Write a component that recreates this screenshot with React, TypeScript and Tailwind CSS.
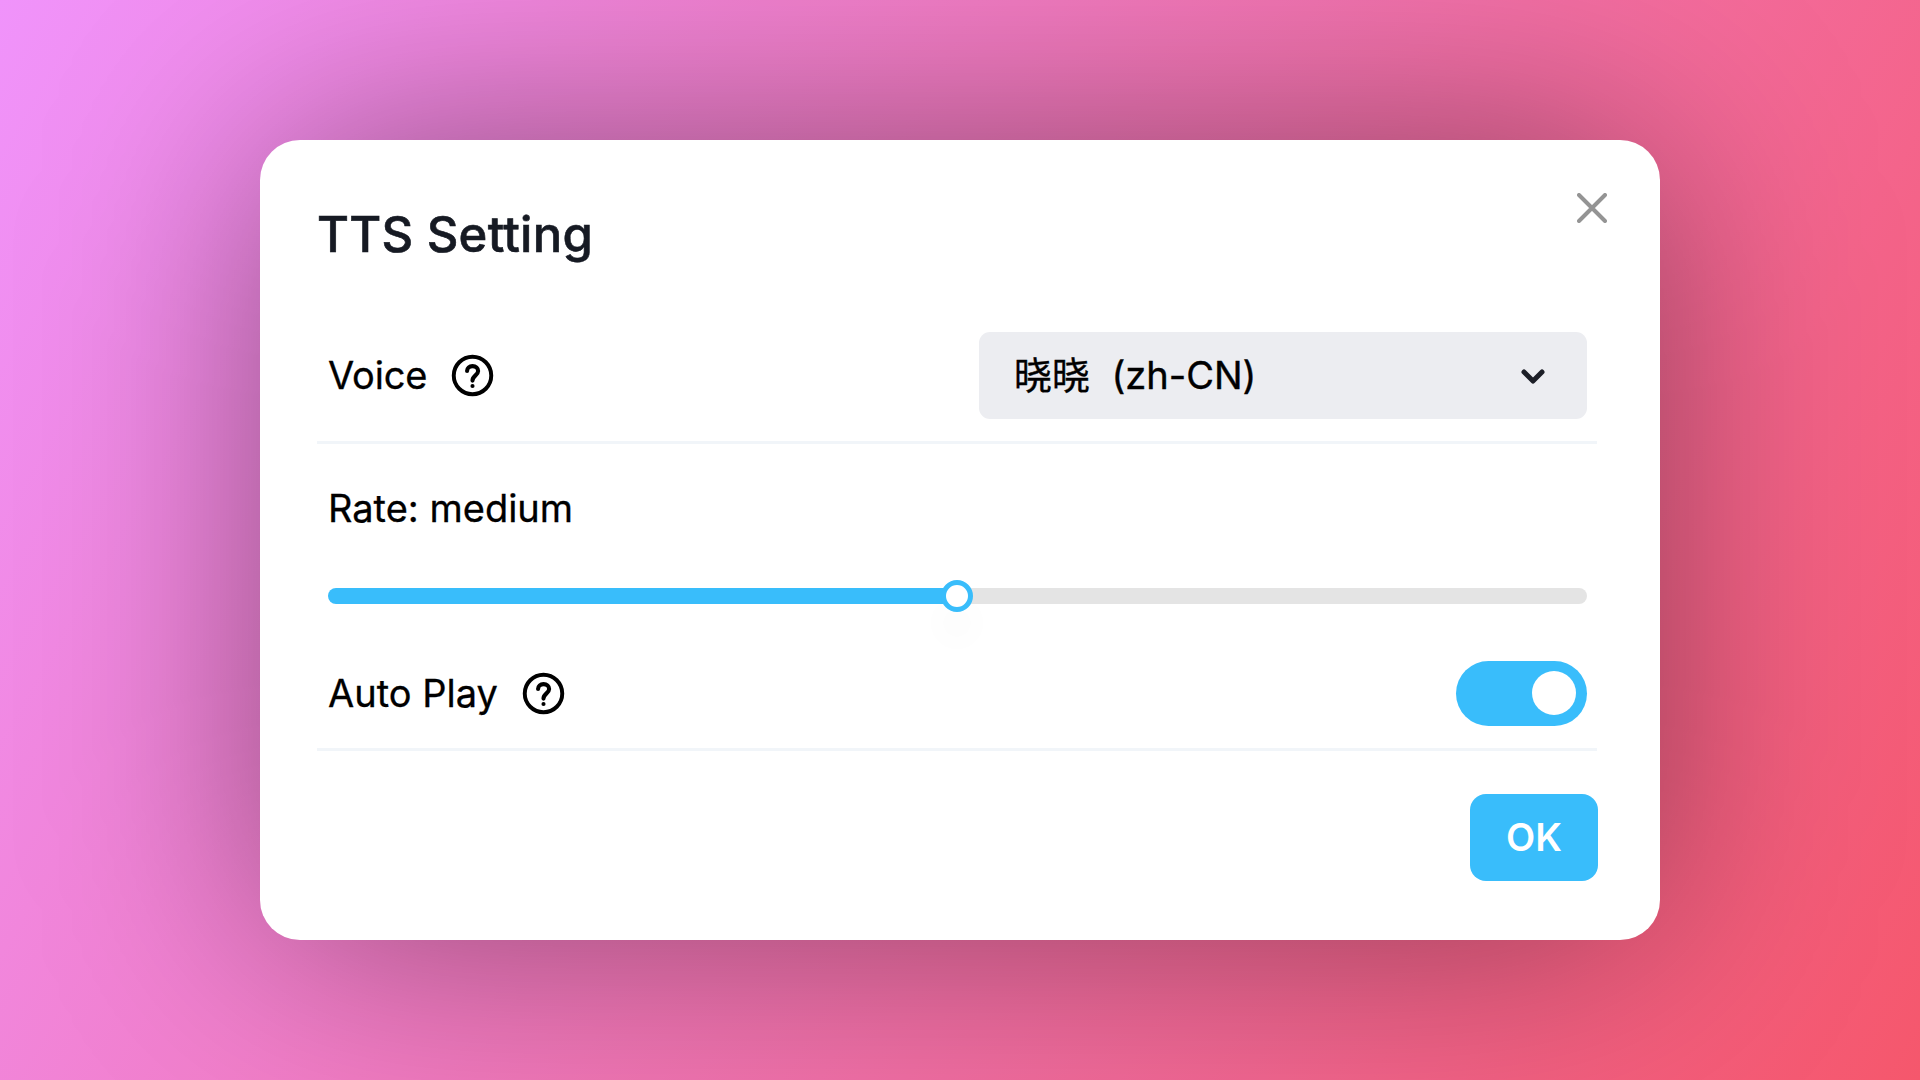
import React from "react";

function HelpIcon() {
  return (
    <svg width="45" height="45" viewBox="0 0 24 24" fill="none" stroke="currentColor" strokeWidth="2.1">
      <circle cx="12" cy="12" r="10" />
      <path d="M9.100 9.600C9.100 8 10.300 7 12 7C13.800 7 15 8.100 15 9.600C15 11.800 12 12.100 12 14.700" strokeWidth="2.2" strokeLinecap="round" />
      <circle cx="12" cy="17.600" r="1.100" fill="currentColor" stroke="none" />
    </svg>
  );
}

function Label({ children, help }: { children: React.ReactNode; help?: boolean }) {
  return (
    <div className="flex items-center gap-[23px]">
      <span className="-mt-px text-[38px] leading-[54px] text-black [-webkit-text-stroke:0.3px_black]">{children}</span>
      {help && <HelpIcon />}
    </div>
  );
}

export default function App() {
  return (
    <main className="isolate flex h-[1080px] w-[1920px] items-center justify-center overflow-hidden bg-[linear-gradient(120deg,#f093fb_0%,#f5576c_100%)] font-['Inter','Noto_Sans_CJK_SC',sans-serif]">
      <section className="relative h-[800px] w-[1400px] rounded-[40px] bg-white pt-[60px] pr-[63px] pl-[57px]">
        <div className="absolute inset-0 -z-10 rounded-[100px] bg-black/40 blur-[110px]" />
        <button className="absolute top-[53px] right-[53px]" aria-label="Close">
          <svg width="30" height="30" viewBox="0 0 30 30" fill="none" stroke="#949494" strokeWidth="4" strokeLinecap="round">
            <path d="M2 2L28 28M28 2L2 28" />
          </svg>
        </button>
        <h1 className="h-[70px] text-[49px] leading-[70px] font-medium tracking-[0.25px] text-[#161a23] [-webkit-text-stroke:0.6px_#161a23]">TTS Setting</h1>

        <div className="mt-[40px] flex h-[134px] items-center justify-between border-b-[3px] border-slate-100 pr-[10px] pl-[11px]">
          <Label help><span className="tracking-[-0.2px]">Voice</span></Label>
          <button className="flex h-[87px] w-[608px] items-center justify-between rounded-[11px] bg-[#ecedf1] pr-[42px] pl-[35px] text-[38px] text-black">
            <span className="whitespace-pre [-webkit-text-stroke:0.4px_black]">晓晓  (zh-CN)</span>
            <svg width="24" height="16" viewBox="0 0 24 16" fill="none" stroke="#1c1f27" strokeWidth="5" strokeLinecap="round" strokeLinejoin="round">
              <path d="M3 4L12 13L21 4" />
            </svg>
          </button>
        </div>

        <div className="pt-[38px] pr-[10px] pl-[11px]">
          <Label>Rate: medium</Label>
          <div className="mt-[44px] flex h-[33px] items-center">
            <div className="h-[16px] w-[629px] rounded-l-full bg-[#39bdfb]" />
            <div className="z-10 -mx-[16px] size-[32px] shrink-0 rounded-full border-[5.500px] border-[#39bdfb] bg-white shadow-[0_27px_27px_8px_rgba(0,0,0,0.012)]" />
            <div className="h-[16px] grow rounded-r-full bg-[#e4e4e4]" />
          </div>
        </div>

        <div className="mt-[26px] flex h-[113px] items-center justify-between border-b-[3px] border-slate-100 pr-[10px] pl-[11px]">
          <Label help>Auto Play</Label>
          <div className="flex h-[65px] w-[131px] items-center justify-end rounded-full bg-[#39bdfb] pr-[11px]">
            <div className="size-[44px] rounded-full bg-white" />
          </div>
        </div>

        <div className="mt-[43px] -mr-px flex justify-end">
          <button className="h-[87px] w-[128px] rounded-[16px] bg-[#39bdfb] text-[38px] font-semibold text-white">OK</button>
        </div>
      </section>
    </main>
  );
}
